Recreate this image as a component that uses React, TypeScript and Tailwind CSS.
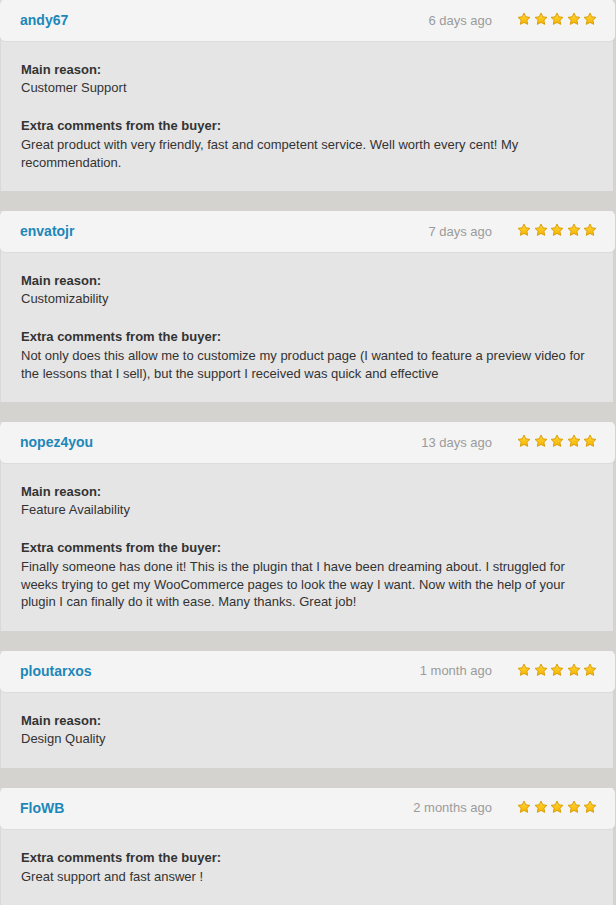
import React from 'react';

type Review = {
  user: string;
  when: string;
  reason?: string;
  comment?: string;
};

const reviews: Review[] = [
  {
    user: 'andy67',
    when: '6 days ago',
    reason: 'Customer Support',
    comment:
      'Great product with very friendly, fast and competent service. Well worth every cent! My recommendation.',
  },
  {
    user: 'envatojr',
    when: '7 days ago',
    reason: 'Customizability',
    comment:
      'Not only does this allow me to customize my product page (I wanted to feature a preview video for the lessons that I sell), but the support I received was quick and effective',
  },
  {
    user: 'nopez4you',
    when: '13 days ago',
    reason: 'Feature Availability',
    comment:
      'Finally someone has done it! This is the plugin that I have been dreaming about. I struggled for weeks trying to get my WooCommerce pages to look the way I want. Now with the help of your plugin I can finally do it with ease. Many thanks. Great job!',
  },
  {
    user: 'ploutarxos',
    when: '1 month ago',
    reason: 'Design Quality',
  },
  {
    user: 'FloWB',
    when: '2 months ago',
    comment: 'Great support and fast answer !',
  },
];

function Star() {
  return (
    <svg width="14" height="14" viewBox="0 0 24 24" className="block">
      <defs>
        <linearGradient id="starFill" x1="0" y1="0" x2="0" y2="1">
          <stop offset="0" stopColor="#ffd83a" />
          <stop offset="1" stopColor="#f6b400" />
        </linearGradient>
      </defs>
      <path
        d="M12 1.8l3.1 6.5 7.1.9-5.2 4.9 1.3 7.1L12 17.8l-6.3 3.4 1.3-7.1-5.2-4.9 7.1-.9z"
        fill="url(#starFill)"
        stroke="#d99a00"
        strokeWidth="1.6"
        strokeLinejoin="round"
      />
    </svg>
  );
}

function ReviewCard({ review }: { review: Review }) {
  return (
    <div className="bg-[#e5e5e5] border-l border-[#d9d9d9] mr-[3px]">
      <div className="-ml-px -mr-[2px] h-[41px] bg-[#f4f4f4] rounded-[5px] flex items-center pl-5 pr-[18px] shadow-[0_1px_0_rgba(0,0,0,0.04)]">
        <span className="text-[14px] font-bold text-[#1d87b9]">{review.user}</span>
        <span className="ml-auto text-[13px] text-[#9b9b9b]">{review.when}</span>
        <div className="ml-[25px] flex gap-[2.5px] -mt-[3px]">
          <Star />
          <Star />
          <Star />
          <Star />
          <Star />
        </div>
      </div>
      <div className="pl-5 pr-[17px] pt-5 pb-5 text-[13px] leading-[18px] text-[#333]">
        {review.reason && (
          <div>
            <div className="font-bold">Main reason:</div>
            <div>{review.reason}</div>
          </div>
        )}
        {review.comment && (
          <div className={review.reason ? 'mt-5' : ''}>
            <div className="font-bold">Extra comments from the buyer:</div>
            <div className="mt-px leading-[17.5px]">{review.comment}</div>
          </div>
        )}
      </div>
    </div>
  );
}

export default function App() {
  return (
    <main
      className="min-h-screen bg-[#d4d3d0] flex flex-col gap-5"
      style={{ fontFamily: '"Liberation Sans", Arial, sans-serif' }}
    >
      {reviews.map((r) => (
        <ReviewCard key={r.user} review={r} />
      ))}
    </main>
  );
}
